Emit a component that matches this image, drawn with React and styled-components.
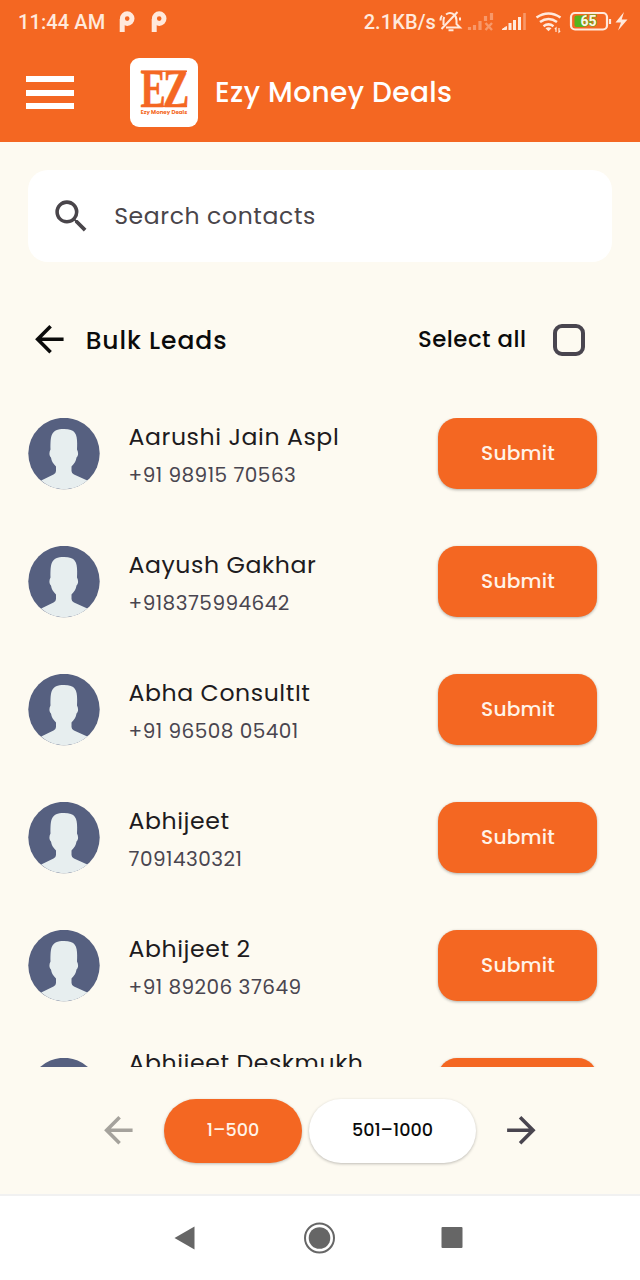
import styled, { createGlobalStyle } from "styled-components";
import { MdArrowBack, MdArrowForward, MdSearch } from "react-icons/md";

const GlobalStyle = createGlobalStyle`
  * {
    box-sizing: border-box;
  }
  body {
    margin: 0;
    background: #fdfaf1;
    font-family: Poppins, Inter, sans-serif;
  }
  button {
    font: inherit;
    border: none;
    padding: 0;
    cursor: pointer;
  }
`;

const Screen = styled.div`
  width: 640px;
  height: 1280px;
  display: flex;
  flex-direction: column;
  overflow: hidden;
  background: #fdfaf1;
`;
const Header = styled.header`
  height: 142px;
  flex-shrink: 0;
  background: #f46722;
`;
const StatusBar = styled.div`
  height: 43px;
  padding: 0 12px 0 18px;
  display: flex;
  align-items: center;
  justify-content: space-between;
  color: #ffe9dc;
`;
const StatusText = styled.span`
  font-family: Roboto, sans-serif;
  font-size: 20px;
  font-weight: 500;
  line-height: 24px;
  letter-spacing: 0.1px;
  padding-top: 1px;
  white-space: nowrap;
`;
const StatusGroup = styled.div`
  display: flex;
  align-items: center;
`;
const PayIcons = styled.div`
  display: flex;
  margin-left: 13px;
`;
const AppBar = styled.div`
  height: 99px;
  padding: 0 0 0 26px;
  display: flex;
  align-items: center;
`;
const MenuButton = styled.button`
  width: 48px;
  height: 33px;
  background: none;
  display: flex;
  flex-direction: column;
  justify-content: space-between;

  span {
    height: 6px;
    width: 100%;
    background: #fff;
  }
`;
const LogoBox = styled.div`
  width: 68px;
  height: 69px;
  margin-left: 56px;
  border-radius: 9px;
  background: #fff;
  overflow: hidden;
`;
const Title = styled.h1`
  margin: 0 0 0 17px;
  font-size: 28px;
  font-weight: 500;
  line-height: 40px;
  letter-spacing: 0.4px;
  color: #fff;
  white-space: nowrap;
`;
const Search = styled.div`
  height: 92px;
  margin: 28px 28px 0;
  padding-left: 21.5px;
  flex-shrink: 0;
  display: flex;
  align-items: center;
  border-radius: 20px;
  background: #fff;
  color: #49454a;
  font-size: 23.5px;
  letter-spacing: 0.62px;

  svg {
    width: 42.7px;
    height: 42.7px;
    margin-right: 22px;
  }
  span {
    padding-bottom: 2px;
  }
`;
const Heading = styled.div`
  height: 156px;
  padding: 0 55px 1px 28px;
  flex-shrink: 0;
  display: flex;
  align-items: center;
  color: #0b0b0b;

  svg {
    width: 42.7px;
    height: 42.7px;
  }
`;
const HeadingTitle = styled.h2`
  margin: 0 auto 0 15px;
  padding-top: 3px;
  font-size: 25px;
  font-weight: 500;
  letter-spacing: 0.9px;
`;
const SelectAll = styled.span`
  padding-bottom: 1px;
  font-size: 22.8px;
  font-weight: 500;
  letter-spacing: 0.5px;
`;
const Checkbox = styled.span`
  width: 32px;
  height: 32px;
  margin-left: 26.5px;
  border: 4px solid #49454f;
  border-radius: 9px;
`;
const List = styled.ul`
  height: 649px;
  margin: 0;
  padding: 0 43px 0 28px;
  flex-shrink: 0;
  overflow: hidden;
  list-style: none;
`;
const Contact = styled.li`
  height: 128px;
  display: flex;
  align-items: flex-start;
`;
const Info = styled.div`
  flex: 1;
  margin: ${(props) => (props.$tall ? "-14px" : "0")} 0 0 28.5px;
  white-space: nowrap;
`;
const Name = styled.div`
  height: 38px;
  font-size: 23.6px;
  line-height: 38px;
  letter-spacing: 0.58px;
  color: #1d1b20;
`;
const Phone = styled.div`
  height: 38px;
  font-size: 20px;
  line-height: 38px;
  letter-spacing: 0.48px;
  color: #49454f;
`;
const Submit = styled.button`
  width: 159px;
  height: 71px;
  padding: 0 0 1px 1px;
  border-radius: 19px;
  background: #f46722;
  color: #fff3e8;
  font-size: 20.2px;
  font-weight: 500;
  letter-spacing: 0.2px;
  box-shadow: 0 1px 3px rgba(0, 0, 0, 0.3);
`;
const Pager = styled.div`
  height: 127px;
  flex-shrink: 0;
  display: flex;
  align-items: center;
  justify-content: center;
  color: #49454f;

  svg {
    width: 42.7px;
    height: 42.7px;
  }
  > svg:first-child {
    color: #a5a29c;
  }
`;
const Pages = styled.div`
  display: flex;
  gap: 7px;
  margin: 0 24px;
`;
const Page = styled.button`
  width: ${(props) => props.$width}px;
  height: 64px;
  padding-bottom: 2px;
  border-radius: 32px;
  background: ${(props) => (props.$active ? "#f46722" : "#fff")};
  color: ${(props) => (props.$active ? "#fff3e8" : "#0b0b0b")};
  font-size: 17.6px;
  font-weight: 500;
  box-shadow: 0 1px 3px rgba(0, 0, 0, 0.25);
`;
const NavBar = styled.nav`
  flex: 1;
  border-top: 2px solid #f1f1f1;
  background: #fff;

  svg {
    display: block;
  }
`;

const contacts = [
  { name: "Aarushi Jain Aspl", phone: "+91 98915 70563" },
  { name: "Aayush Gakhar", phone: "+918375994642" },
  { name: "Abha ConsultIt", phone: "+91 96508 05401" },
  { name: "Abhijeet", phone: "7091430321" },
  { name: "Abhijeet 2", phone: "+91 89206 37649" },
  { name: "Abhijeet Deskmukh", tall: true },
];

function PayIcon() {
  return (
    <svg width="32" height="24" viewBox="0 0 32 24" fill="none" stroke="currentColor" strokeWidth="5">
      <circle cx="9.200" cy="8.600" r="4.800" />
      <path d="M4.200 9v13" />
    </svg>
  );
}

function StatusIcons() {
  return (
    <svg width="192" height="30" viewBox="436 7 192 30" fill="none" stroke="currentColor">
      {/* muted bell */}
      <path d="M446 14.500q4-3 8 0 2.500 2 2.500 6v3.500l3.500 3.500h-14M443.500 25v-4.500q0-2 .8-3.500M448.500 30.200h5" strokeWidth="2" />
      <path d="M441.500 29L457.500 12M440.500 20.500q0-3 1.500-5M460 20.500v-3" strokeWidth="2" />
      {/* first sim, no service */}
      <g opacity=".38">
        <path d="M469.500 30v-3M474.500 30v-5M480 30v-9M485.500 21v-5M491.500 20v-7" strokeWidth="3.200" />
        <path d="M485.500 23l6.500 7M492 23l-6.500 7" strokeWidth="2.400" />
      </g>
      {/* second sim */}
      <path d="M502 29.500l4.500-3v3z" fill="currentColor" strokeWidth="1" />
      <path d="M510 30v-7M514.500 30v-10M519.500 30v-13" strokeWidth="3" />
      <path d="M524.500 30V13" strokeWidth="2.600" opacity=".38" />
      {/* wifi */}
      <path d="M536.500 17.500q12-8 24 0M540 22q8.500-6 17 0M543.500 26.200q5-3.500 10 0" strokeWidth="2.600" />
      <path d="M545.500 28.200L548.500 31.200l3-3q-3-2-6 0z" fill="currentColor" stroke="none" />
      <path d="M556 32v-4l-1.200 1.200M559 28v4l1.200-1.200" strokeWidth="1.200" />
      {/* battery */}
      <rect x="571" y="13" width="36" height="16.500" rx="4" strokeWidth="2.200" />
      <path d="M576.500 15.500H584v11.500h-7.500q-2 0-2-2v-7.500q0-2 2-2z" fill="#55b51c" stroke="none" />
      <path d="M610 19v5" strokeWidth="2.200" />
      <text x="588.500" y="26.200" textAnchor="middle" fontFamily="Roboto, sans-serif" fontSize="14" fontWeight="700" fill="#fff3e8" stroke="#55b51c" strokeWidth="1.200" paintOrder="stroke">65</text>
      <path d="M624 12l-8.500 10.500h5.500l-3 8 9.500-11h-5.800z" fill="currentColor" stroke="none" />
    </svg>
  );
}

function Logo() {
  return (
    <svg width="68" height="69" viewBox="0 0 68 69" fill="#f46722">
      <g fontFamily="'Liberation Serif', serif" fontWeight="700" fontSize="54" stroke="#f46722" strokeWidth=".6">
        <text transform="translate(10.500 48.500) scale(.7 1)">E</text>
        <text transform="translate(33 48.500) scale(.73 1)">Z</text>
      </g>
      <path d="M11 12.500h46v1.500H11zM11 47.500h46v1.500H11z" />
      <text x="34" y="56" textAnchor="middle" fontSize="5.500" fontWeight="700">Ezy Money Deals</text>
    </svg>
  );
}

function Avatar() {
  return (
    <svg width="72" height="72" viewBox="0 0 72 72">
      <circle cx="36" cy="35.500" r="35.700" fill="#566080" />
      <path
        d="M13.200 62.500L25.500 56.500Q28 55 28 53V48.500C25 45.500 23.500 43 23 39.500C21 38 21 34 22.500 31.500C22.500 18 22.500 11 36 11S49.500 18 49 31.500C50.500 34 50.500 38 48.500 39.500C48 43 46.500 45.500 43.500 48.500V53Q43.500 55 46 56.500L59.300 62.500C46 74 26 74 13.200 62.500z"
        fill="#e7eeef"
      />
    </svg>
  );
}

export default function App() {
  return (
    <Screen>
      <GlobalStyle />
      <Header>
        <StatusBar>
          <StatusGroup>
            <StatusText>11:44 AM</StatusText>
            <PayIcons>
              <PayIcon />
              <PayIcon />
            </PayIcons>
          </StatusGroup>
          <StatusGroup>
            <StatusText>2.1KB/s</StatusText>
            <StatusIcons />
          </StatusGroup>
        </StatusBar>
        <AppBar>
          <MenuButton aria-label="Menu">
            <span />
            <span />
            <span />
          </MenuButton>
          <LogoBox>
            <Logo />
          </LogoBox>
          <Title>Ezy Money Deals</Title>
        </AppBar>
      </Header>
      <Search>
        <MdSearch />
        <span>Search contacts</span>
      </Search>
      <Heading>
        <MdArrowBack />
        <HeadingTitle>Bulk Leads</HeadingTitle>
        <SelectAll>Select all</SelectAll>
        <Checkbox />
      </Heading>
      <List>
        {contacts.map((contact) => (
          <Contact key={contact.name}>
            <Avatar />
            <Info $tall={contact.tall}>
              <Name>{contact.name}</Name>
              {contact.phone && <Phone>{contact.phone}</Phone>}
            </Info>
            <Submit>{contact.phone && "Submit"}</Submit>
          </Contact>
        ))}
      </List>
      <Pager>
        <MdArrowBack />
        <Pages>
          <Page $width={138} $active>1–500</Page>
          <Page $width={167}>501–1000</Page>
        </Pages>
        <MdArrowForward />
      </Pager>
      <NavBar>
        <svg width="640" height="83" viewBox="0 1196 640 83" fill="#666">
          <path d="M174.500 1238l20-11.500v23z" />
          <circle cx="319.500" cy="1238" r="14.500" fill="none" stroke="#666" strokeWidth="2" />
          <circle cx="319.500" cy="1238" r="10.800" />
          <rect x="441.500" y="1227" width="21" height="21" rx="1" />
        </svg>
      </NavBar>
    </Screen>
  );
}
